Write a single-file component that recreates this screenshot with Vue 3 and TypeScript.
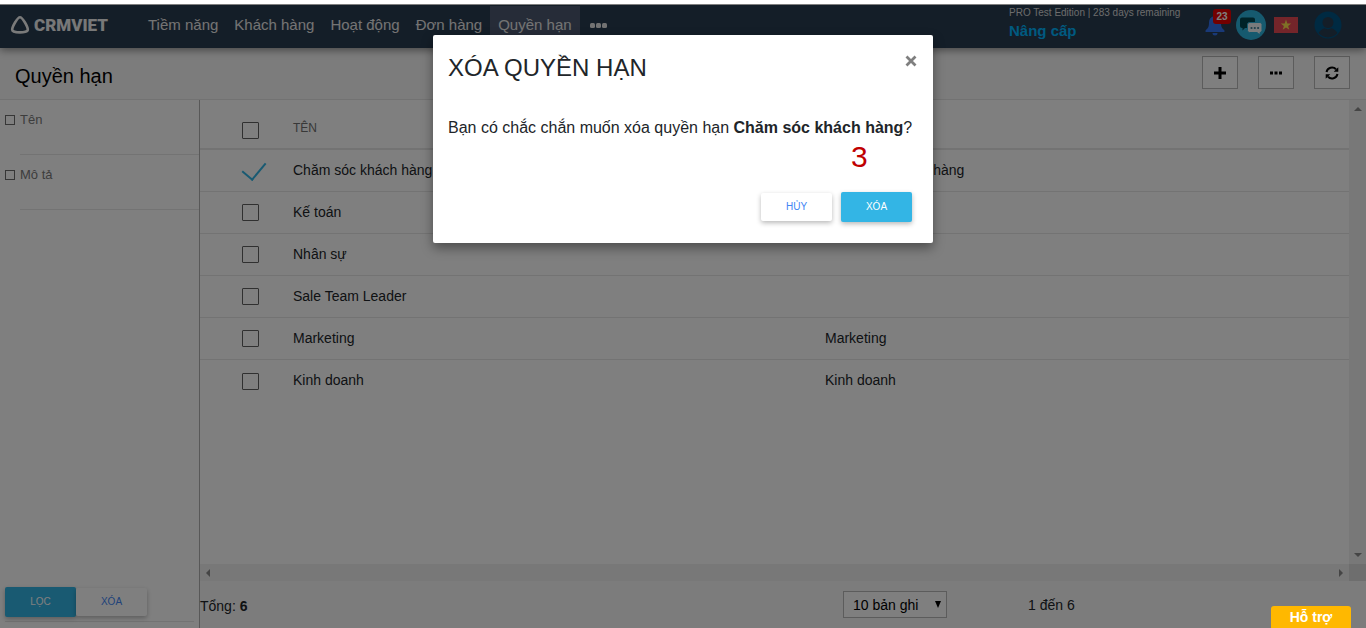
<script setup lang="ts">
import { ref } from 'vue'

interface Role {
  name: string
  description: string
  selected: boolean
}

const menu = ['Tiềm năng', 'Khách hàng', 'Hoạt động', 'Đơn hàng', 'Quyền hạn']
const activeMenu = 'Quyền hạn'
const filters = ref([
  { id: 'filter-name', label: 'Tên', on: false },
  { id: 'filter-description', label: 'Mô tả', on: false },
])
const roles = ref<Role[]>([
  { name: 'Chăm sóc khách hàng', description: 'Chăm sóc khách hàng', selected: true },
  { name: 'Kế toán', description: '', selected: false },
  { name: 'Nhân sự', description: '', selected: false },
  { name: 'Sale Team Leader', description: '', selected: false },
  { name: 'Marketing', description: 'Marketing', selected: false },
  { name: 'Kinh doanh', description: 'Kinh doanh', selected: false },
])
const allSelected = ref(false)
const pageSize = ref('10')
</script>

<template>
  <div class="page">
    <div class="shell">
      <header class="topbar">
        <a href="#" class="brand" aria-label="CRMVIET">
          <svg width="20" height="20" viewBox="0 0 20 20" aria-hidden="true">
            <path d="M10 2.2C7.600 2.200 2.200 11.400 2.200 14.700C2.200 18.200 17.800 18.200 17.800 14.700C17.800 11.400 12.400 2.200 10 2.200Z" fill="none" stroke="#f4f4f4" stroke-width="2.6" />
          </svg>
          <span>CRMVIET</span>
        </a>
        <nav class="menu">
          <a v-for="item in menu" :key="item" href="#" :class="{ active: item === activeMenu }">{{ item }}</a>
          <button type="button" class="more" aria-label="Thêm">
            <svg width="20" height="6" viewBox="0 0 20 6"><g fill="#e4e4e4"><rect x="1" y="1" width="5" height="5" rx="1.500" /><rect x="7" y="1" width="5" height="5" rx="1.500" /><rect x="13" y="1" width="5" height="5" rx="1.500" /></g></svg>
          </button>
        </nav>
        <div class="plan">
          <span>PRO Test Edition | 283 days remaining</span>
          <a href="#">Nâng cấp</a>
        </div>
        <div class="tools">
          <button type="button" class="bell" aria-label="Thông báo">
            <svg width="20" height="22" viewBox="0 0 20 22"><path d="M10 0.500C11 0.500 11.600 1.200 11.600 2.200C14.600 3 16 5.600 16 8.600C16 13.500 17.300 14.800 19.300 16.200Q20.200 18 18.800 18H1.200Q-0.200 18 0.700 16.200C2.700 14.800 4 13.500 4 8.600C4 5.600 5.400 3 8.400 2.200C8.400 1.200 9 0.500 10 0.500Z M7.500 19H12.500A2.500 2.500 0 0 1 7.500 19Z" fill="#3272ee" /></svg>
            <span class="badge">23</span>
          </button>
          <button type="button" class="chat" aria-label="Trò chuyện">
            <svg width="30" height="30" viewBox="0 0 30 30">
              <circle cx="15" cy="15" r="15" fill="#2cb5de" />
              <path d="M6 7.500H17Q19 7.500 19 9.500V16Q19 18 17 18H9L6.500 20.500V18H6Q4 18 4 16V9.500Q4 7.500 6 7.500Z" fill="#004650" />
              <path d="M13.500 12.500H24Q26 12.500 26 14.500V20.500Q26 22.500 24 22.500V25L21 22.500H13.500Q11.500 22.500 11.500 20.500V14.500Q11.500 12.500 13.500 12.500Z" fill="#f2f6f8" stroke="#2cb5de" stroke-width="1" />
              <g fill="#3c7d94"><circle cx="15.500" cy="18" r="1.100" /><circle cx="18.800" cy="18" r="1.100" /><circle cx="22.100" cy="18" r="1.100" /></g>
            </svg>
          </button>
          <button type="button" class="flag" aria-label="Tiếng Việt">
            <svg width="24" height="16" viewBox="0 0 24 16"><rect width="24" height="16" fill="#e84a55" /><path d="M12 2.600L13.300 6.500H17.200L14.100 8.900L15.300 12.800L12 10.400L8.700 12.800L9.900 8.900L6.800 6.500H10.700Z" fill="#ffe34c" /></svg>
          </button>
          <button type="button" class="account" aria-label="Tài khoản">
            <svg width="28" height="28" viewBox="0 0 28 28"><circle cx="14" cy="14" r="13.500" fill="#005484" /><path d="M4.500 22C6.500 18.800 8.500 18 10.800 17.300C12.800 18.600 15.200 18.600 17.200 17.300C19.500 18 21.500 18.800 23.500 22A12.500 12.500 0 0 1 4.500 22Z" fill="#283c50" /><circle cx="14" cy="11.500" r="5.500" fill="#283c50" /></svg>
          </button>
        </div>
      </header>

      <div class="titlebar">
        <h1>Quyền hạn</h1>
        <div class="actions">
          <button type="button" aria-label="Thêm mới"><svg width="14" height="14" viewBox="0 0 14 14"><path d="M7 1V13M1 7H13" stroke="#000" stroke-width="3" /></svg></button>
          <button type="button" aria-label="Tùy chọn"><svg width="14" height="14" viewBox="0 0 14 14"><path d="M1 5.500H4V8.500H1ZM5.500 5.500H8.500V8.500H5.500ZM10 5.500H13V8.500H10Z" fill="#000" /></svg></button>
          <button type="button" aria-label="Tải lại"><svg width="14" height="14" viewBox="0 0 14 14"><path d="M1.500 6A5.600 5.600 0 0 1 11 3.300M12.500 8A5.600 5.600 0 0 1 3 10.700" fill="none" stroke="#000" stroke-width="2" /><path d="M13.300 1.200V5.800H8.700ZM0.700 12.800V8.200H5.300Z" fill="#000" /></svg></button>
        </div>
      </div>

      <div class="body">
        <aside class="sidebar">
          <div v-for="f in filters" :key="f.id" class="filter">
            <input :id="f.id" v-model="f.on" type="checkbox">
            <label :for="f.id">{{ f.label }}</label>
          </div>
          <div class="filter-actions">
            <button type="button" class="btn primary">LỌC</button>
            <button type="button" class="btn light">XÓA</button>
          </div>
        </aside>

        <main class="content">
          <div class="scroller">
            <table>
              <colgroup><col class="col-check"><col class="col-name"><col></colgroup>
              <thead>
                <tr>
                  <th><input v-model="allSelected" type="checkbox" class="box" aria-label="Chọn tất cả"></th>
                  <th>TÊN</th>
                  <th aria-label="Mô tả"></th>
                </tr>
              </thead>
              <tbody>
                <tr v-for="role in roles" :key="role.name">
                  <td><input v-model="role.selected" type="checkbox" class="box" :aria-label="role.name"></td>
                  <td>{{ role.name }}</td>
                  <td>{{ role.description }}</td>
                </tr>
              </tbody>
            </table>
            <div class="vbar" aria-hidden="true">
              <svg width="8" height="4" viewBox="0 0 8 4"><path d="M0 4L4 0L8 4Z" fill="#8a8a8a" /></svg>
              <svg width="8" height="4" viewBox="0 0 8 4"><path d="M0 0L4 4L8 0Z" fill="#8a8a8a" /></svg>
            </div>
            <div class="hbar" aria-hidden="true">
              <svg width="4" height="8" viewBox="0 0 4 8"><path d="M4 0L0 4L4 8Z" fill="#8a8a8a" /></svg>
              <svg width="4" height="8" viewBox="0 0 4 8"><path d="M0 0L4 4L0 8Z" fill="#8a8a8a" /></svg>
            </div>
            <div class="corner"></div>
          </div>
          <footer class="pager">
            <span class="total">Tổng: <b>6</b></span>
            <span class="size">
              <select v-model="pageSize" aria-label="Số bản ghi mỗi trang">
                <option value="10">10 bản ghi</option>
                <option value="20">20 bản ghi</option>
              </select>
              <svg width="6" height="7" viewBox="0 0 6 7" aria-hidden="true"><path d="M0 0H6L3 7Z" fill="#000" /></svg>
            </span>
            <span class="range">1 đến 6</span>
          </footer>
        </main>
      </div>

      <div class="backdrop">
        <section class="modal" role="dialog" aria-modal="true" aria-labelledby="modal-title">
          <div class="modal-head">
            <h2 id="modal-title">XÓA QUYỀN HẠN</h2>
            <button type="button" class="close" aria-label="Đóng"><svg width="12" height="12" viewBox="0 0 12 12"><path d="M1.500 1.500L10.500 10.500M10.500 1.500L1.500 10.500" stroke="#7f7f7f" stroke-width="2.800" /></svg></button>
          </div>
          <p>Bạn có chắc chắn muốn xóa quyền hạn <b>Chăm sóc khách hàng</b>?</p>
          <span class="step">3</span>
          <div class="modal-actions">
            <button type="button" class="btn light">HỦY</button>
            <button type="button" class="btn primary">XÓA</button>
          </div>
        </section>
      </div>
      <button type="button" class="support">Hỗ trợ</button>
    </div>
  </div>
</template>

<style>
body {
  margin: 0;
  background: #fff;
}
</style>

<style scoped>
* {
  box-sizing: border-box;
}
.page {
  height: 100vh;
  padding-top: 4px;
  font-family: "Liberation Sans", Arial, sans-serif;
  color: #212529;
}
.shell {
  position: relative;
  display: flex;
  flex-direction: column;
  height: 100%;
  overflow: hidden;
  background: #f8f8f8;
}
button {
  padding: 0;
  border: 0;
  background: none;
  font-family: inherit;
}
button svg {
  display: block;
}
a {
  text-decoration: none;
}
.topbar {
  position: relative;
  z-index: 1;
  display: flex;
  flex: none;
  height: 44px;
  border-top: 1px solid #fff;
  background: #283c50;
  box-shadow: 0 2px 8px rgba(0, 0, 0, 0.45);
}
.brand {
  display: flex;
  align-items: center;
  gap: 4px;
  width: 140px;
  padding: 0 0 4px 10px;
  color: #f0f0f0;
  font: 900 17px Roboto, sans-serif;
}
.menu {
  display: flex;
  padding-top: 1px;
}
.menu a {
  padding: 0 8px;
  color: #e8e8e8;
  font-size: 15px;
  line-height: 38px;
}
.menu a.active {
  background: #4c5870;
}
.more {
  padding: 0 9px 5px;
}
.plan {
  display: flex;
  flex-direction: column;
  width: 188px;
  margin-left: auto;
  padding-top: 2px;
  color: #d8d8d8;
  font-size: 10px;
  line-height: 12px;
}
.plan a {
  color: #00b4ff;
  font-size: 15px;
  font-weight: bold;
  line-height: 24px;
}
.tools {
  display: flex;
  align-items: center;
  width: 169px;
  padding: 0 0 3px 8px;
}
.bell {
  position: relative;
  margin-right: 11px;
}
.badge {
  position: absolute;
  top: -5px;
  left: 8px;
  width: 18px;
  border-radius: 3px;
  background: #e60000;
  color: #fff;
  font-size: 10px;
  font-weight: bold;
  line-height: 15px;
}
.chat {
  margin-right: 8px;
}
.flag {
  margin-right: 16px;
}
.titlebar {
  display: flex;
  flex: none;
  align-items: center;
  justify-content: space-between;
  height: 52px;
  padding: 0 16px 0 15px;
  border-bottom: 1px solid #e4e4e4;
}
h1 {
  margin: 0;
  padding-top: 4px;
  color: #000;
  font-size: 20px;
  font-weight: normal;
  line-height: 28px;
}
.actions {
  display: flex;
  gap: 20px;
  padding-bottom: 2px;
}
.actions button {
  display: grid;
  place-items: center;
  width: 36px;
  height: 33px;
  border: 1px solid #b8b8b8;
  background: #fff;
}
.body {
  display: flex;
  flex: 1;
  min-height: 0;
}
.sidebar {
  display: flex;
  flex: none;
  flex-direction: column;
  width: 200px;
  border-right: 1px solid #b0b0b0;
  background: #fff;
}
.filter {
  display: flex;
  align-items: center;
  gap: 5px;
  height: 55px;
  padding: 0 0 16px 5px;
  background: linear-gradient(#e6e6e6, #e6e6e6) 20px 100% / 100% 1px no-repeat;
  color: #7a7a7a;
  font-size: 13px;
}
.filter input {
  appearance: none;
  width: 10px;
  height: 10px;
  margin: 0;
  border: 1px solid #6c6c6c;
}
.filter-actions {
  display: flex;
  align-items: center;
  margin: auto 5px 6px;
  padding-bottom: 4px;
  border-bottom: 1px solid #e6e6e6;
}
.btn {
  width: 71px;
  height: 28px;
  border-radius: 2px;
  font-size: 10px;
  line-height: 28px;
  box-shadow: 0 2px 5px rgba(0, 0, 0, 0.28);
}
.btn.primary {
  height: 30px;
  background: #33b5e5;
  color: #fff;
}
.btn.light {
  background: #fff;
  color: #4285f4;
}
.content {
  display: flex;
  flex: 1;
  flex-direction: column;
  min-width: 0;
}
.scroller {
  display: grid;
  flex: 1;
  grid-template-columns: 1fr 17px;
  grid-template-rows: 1fr 17px;
  align-items: start;
  background: #fff;
}
table {
  width: 100%;
  border-spacing: 0;
  table-layout: fixed;
  font-size: 14px;
}
.col-check {
  width: 93px;
}
.col-name {
  width: 532px;
}
th {
  height: 50px;
  padding: 8px 0 0;
  border-bottom: 2px solid #e6e6e6;
  color: #707070;
  font-size: 12px;
  font-weight: normal;
  text-align: left;
}
td {
  height: 42px;
  padding: 0 0 2px;
  border-bottom: 1px solid #e6e6e6;
}
tr:last-child td {
  border-bottom: 0;
}
th:first-child {
  padding: 12px 0 0 42px;
}
td:first-child {
  padding: 0 0 0 42px;
}
.box {
  position: relative;
  display: block;
  appearance: none;
  width: 17px;
  height: 17px;
  margin: 0;
  border: 1px solid #606060;
  border-radius: 1px;
}
.box:checked {
  border-color: transparent;
}
.box:checked::before {
  content: "";
  position: absolute;
  top: -6px;
  left: 4px;
  width: 12px;
  height: 20px;
  border-right: 2px solid #33b5e5;
  border-bottom: 2px solid #33b5e5;
  transform: rotate(40deg);
}
.vbar,
.hbar {
  display: flex;
  align-items: center;
  justify-content: space-between;
  align-self: stretch;
  padding: 7px 0;
  background: #f1f1f1;
}
.vbar {
  flex-direction: column;
}
.hbar {
  padding: 0 6px;
}
.corner {
  align-self: stretch;
  background: #dcdcdc;
}
.pager {
  display: grid;
  flex: none;
  grid-template-columns: 643px 185px 1fr;
  align-items: center;
  height: 47px;
  font-size: 14px;
}
.total {
  padding-top: 3px;
}
.size {
  position: relative;
  width: 104px;
}
.size select {
  display: block;
  appearance: none;
  width: 100%;
  height: 27px;
  padding: 0 9px;
  border: 1px solid #b8b8b8;
  border-radius: 0;
  background: #fff;
  color: #000;
  font-family: inherit;
  font-size: 14px;
}
.size svg {
  position: absolute;
  top: 10px;
  right: 6px;
}
.backdrop {
  position: absolute;
  z-index: 2;
  inset: 0;
  display: flex;
  align-items: flex-start;
  justify-content: center;
  padding-top: 31px;
  background: rgba(0, 0, 0, 0.5);
}
.modal {
  position: relative;
  width: 500px;
  padding: 16px 15px 21px;
  border-radius: 2px;
  background: #fff;
  box-shadow: 0 5px 12px rgba(0, 0, 0, 0.4);
}
.modal-head {
  display: flex;
  align-items: flex-start;
  justify-content: space-between;
}
h2 {
  margin: 0;
  font-size: 24px;
  font-weight: normal;
  line-height: 34px;
}
.close {
  padding: 4px 1px;
}
.modal p {
  margin: 31px 0 52px;
  font-size: 16px;
  line-height: 24px;
}
.step {
  position: absolute;
  top: 106px;
  left: 418px;
  color: #c00000;
  font-size: 30px;
  line-height: 32px;
}
.modal-actions {
  display: flex;
  align-items: center;
  justify-content: flex-end;
  gap: 9px;
  padding-right: 6px;
}
.support {
  position: absolute;
  z-index: 3;
  right: 15px;
  bottom: 0;
  width: 80px;
  height: 22px;
  border-radius: 3px 3px 0 0;
  background: #ffb800;
  color: #fff;
  font-size: 14px;
  font-weight: bold;
  line-height: 22px;
}
</style>
